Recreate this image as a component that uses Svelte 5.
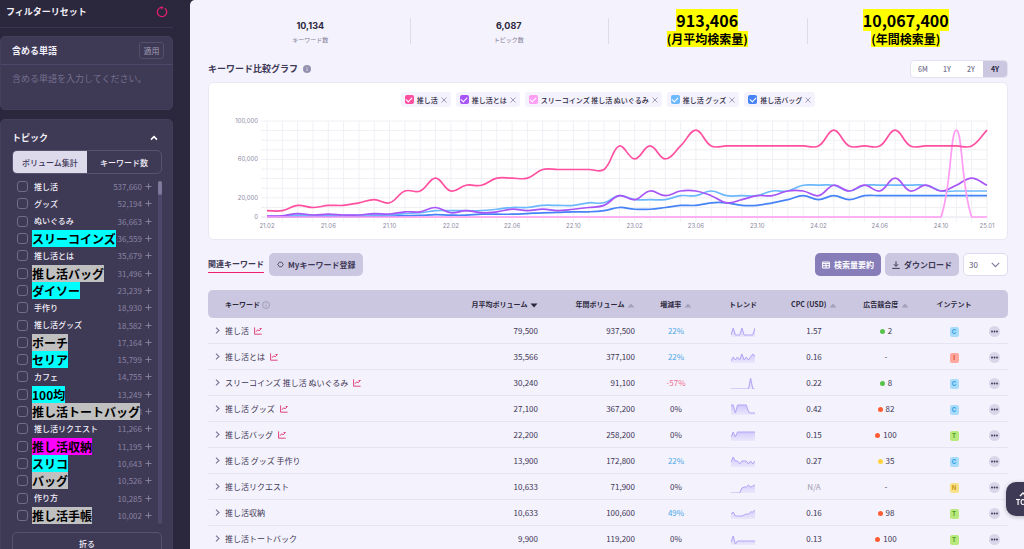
<script lang="ts">
	type Topic = { name: string; count: string; mark?: string };

	const topics: Topic[] = [
		{ name: '推し活', count: '537,660' },
		{ name: 'グッズ', count: '52,194' },
		{ name: 'ぬいぐるみ', count: '36,663' },
		{ name: 'スリーコインズ', count: '36,559', mark: 'cyan' },
		{ name: '推し活とは', count: '35,679' },
		{ name: '推し活バッグ', count: '31,496', mark: 'gray' },
		{ name: 'ダイソー', count: '23,239', mark: 'cyan' },
		{ name: '手作り', count: '18,930' },
		{ name: '推し活グッズ', count: '18,582' },
		{ name: 'ポーチ', count: '17,164', mark: 'gray' },
		{ name: 'セリア', count: '15,799', mark: 'cyan' },
		{ name: 'カフェ', count: '14,755' },
		{ name: '100均', count: '13,249', mark: 'cyan' },
		{ name: '推し活トートバッグ', count: '12,033', mark: 'gray' },
		{ name: '推し活リクエスト', count: '11,266' },
		{ name: '推し活収納', count: '11,195', mark: 'magenta' },
		{ name: 'スリコ', count: '10,643', mark: 'cyan' },
		{ name: 'バッグ', count: '10,526', mark: 'gray' },
		{ name: '作り方', count: '10,285' },
		{ name: '推し活手帳', count: '10,002', mark: 'gray' }
	];

	// monthly search volume in thousands, 21.02 to 25.01
	const series = [
		{
			name: '推し活',
			color: 'pink',
			data: [6.6, 6.6, 12.1, 9.9, 12.1, 12.1, 14.8, 18.1, 14.8, 27.1, 27.1, 40.5, 27.1, 33.1, 33.1, 40.5, 40.5, 40.5, 49.5, 49.5, 49.5, 49.5, 49.5, 74, 60.5, 74, 60.5, 74, 90.5, 74, 74, 74, 74, 74, 74, 74, 74, 90.5, 74, 74, 74, 90.5, 74, 74, 74, 74, 74, 90.5]
		},
		{
			name: '推し活とは',
			color: 'purple',
			data: [0.9, 1.3, 3.6, 2.1, 2.9, 2.1, 2.1, 3.6, 3.1, 5.4, 5.4, 9.9, 4.4, 6.6, 4.4, 5.4, 8.1, 6.6, 8.1, 6.6, 8.1, 9.9, 12.1, 22.2, 18.1, 27.1, 22.2, 27.1, 27.1, 22.2, 14.8, 18.1, 22.2, 22.2, 27.1, 27.1, 22.2, 33.1, 27.1, 33.1, 27.1, 40.5, 27.1, 33.1, 27.1, 33.1, 40.5, 33.1]
		},
		{
			name: 'スリーコインズ 推し活 ぬいぐるみ',
			color: 'rose',
			data: [0, 0, 0, 0, 0, 0, 0, 0, 0, 0, 0, 0, 0, 0, 0, 0, 0, 0, 0, 0, 0, 0, 0, 0, 0, 0, 0, 0, 0, 0, 0, 0, 0, 0, 0, 0, 0, 0, 0, 0, 0, 0, 0, 0, 0, 90.5, 0, 0]
		},
		{
			name: '推し活 グッズ',
			color: 'sky',
			data: [0.7, 1, 1.9, 1.6, 1.9, 1.6, 1.9, 2.4, 2.4, 3.6, 4.4, 6.6, 6.6, 6.6, 6.6, 8.1, 9.9, 9.9, 12.1, 12.1, 12.1, 14.8, 14.8, 22.2, 18.1, 18.1, 18.1, 22.2, 22.2, 27.1, 22.2, 22.2, 22.2, 27.1, 27.1, 33.1, 33.1, 33.1, 27.1, 33.1, 33.1, 33.1, 33.1, 33.1, 27.1, 27.1, 27.1, 27.1]
		},
		{
			name: '推し活バッグ',
			color: 'blue',
			data: [0.3, 0.4, 0.5, 0.5, 0.6, 0.6, 0.7, 0.9, 1, 1.3, 1.6, 2.4, 1.9, 1.9, 2.9, 2.9, 2.9, 3.6, 4.4, 4.8, 5.4, 5.4, 6.6, 9.9, 8.1, 8.1, 9.9, 12.1, 12.1, 14.8, 14.8, 12.1, 12.1, 14.8, 18.1, 22.2, 18.1, 22.2, 18.1, 22.2, 22.2, 22.2, 22.2, 22.2, 22.2, 22.2, 22.2, 22.2]
		}
	];
	const drawOrder = [4, 3, 1, 2, 0];

	const left = 58;
	const top = 14;
	const bottom = 110;
	const step = 720 / 47;
	const px = (i: number) => left + i * step;
	const py = (v: number) => bottom - (v / 100) * (bottom - top);
	const clamp = (y: number) => Math.min(bottom, Math.max(top, y));

	const xLabels = ['21.02', '21.06', '21.10', '22.02', '22.06', '22.10', '23.02', '23.06', '23.10', '24.02', '24.06', '24.10'];
	const yLabels = [
		{ v: 100, text: '100,000' },
		{ v: 60, text: '60,000' },
		{ v: 20, text: '20,000' },
		{ v: 0, text: '0' }
	];

	// smooth line with control points kept inside the plot area
	function smooth(data: number[]) {
		const pts = data.map((v, i) => ({ x: px(i), y: py(v) }));
		const ctrl = pts.map((p, i) => {
			const a = pts[i - 1] ?? p;
			const b = pts[i + 1] ?? p;
			const d1 = Math.hypot(p.x - a.x, p.y - a.y);
			const d2 = Math.hypot(b.x - p.x, b.y - p.y);
			const fa = (0.4 * d1) / (d1 + d2);
			const fb = (0.4 * d2) / (d1 + d2);
			return {
				inX: p.x - fa * (b.x - a.x),
				inY: clamp(p.y - fa * (b.y - a.y)),
				outX: p.x + fb * (b.x - a.x),
				outY: clamp(p.y + fb * (b.y - a.y))
			};
		});
		let d = `M${pts[0].x},${pts[0].y}`;
		for (let i = 1; i < pts.length; i++) {
			d += `C${ctrl[i - 1].outX},${ctrl[i - 1].outY} ${ctrl[i].inX},${ctrl[i].inY} ${pts[i].x},${pts[i].y}`;
		}
		return d;
	}

	const rows = [
		{ word: '推し活', chart: true, month: '79,500', year: '937,500', rate: '22%', cpc: '1.57', comp: '2', level: 'low', intent: 'C', trend: [2, 9, 2, 2, 2, 9, 2, 2, 2, 2, 2, 9] },
		{ word: '推し活とは', chart: true, month: '35,566', year: '377,100', rate: '22%', cpc: '0.16', comp: '-', level: '', intent: 'I', trend: [2, 6, 3, 6, 3, 9, 3, 6, 3, 6, 9, 7] },
		{ word: 'スリーコインズ 推し活 ぬいぐるみ', chart: true, month: '30,240', year: '91,100', rate: '-57%', cpc: '0.22', comp: '8', level: 'low', intent: 'C', trend: [0, 0, 0, 0, 0, 0, 0, 0, 0, 11, 0, 0] },
		{ word: '推し活 グッズ', chart: true, month: '27,100', year: '367,200', rate: '0%', cpc: '0.42', comp: '82', level: 'high', intent: 'C', trend: [10, 10, 2, 10, 10, 10, 10, 10, 3, 2, 2, 2] },
		{ word: '推し活バッグ', chart: true, month: '22,200', year: '258,200', rate: '0%', cpc: '0.15', comp: '100', level: 'high', intent: 'T', trend: [4, 9, 4, 9, 9, 9, 9, 9, 9, 9, 9, 9] },
		{ word: '推し活 グッズ 手作り', chart: false, month: '13,900', year: '172,800', rate: '22%', cpc: '0.27', comp: '35', level: 'mid', intent: 'C', trend: [5, 10, 6, 6, 3, 6, 6, 6, 3, 6, 3, 6] },
		{ word: '推し活リクエスト', chart: false, month: '10,633', year: '71,900', rate: '0%', cpc: 'N/A', comp: '-', level: '', intent: 'N', trend: [0, 0, 0, 0, 0, 5, 6, 6, 8, 6, 7, 8] },
		{ word: '推し活収納', chart: false, month: '10,633', year: '100,600', rate: '49%', cpc: '0.16', comp: '98', level: 'high', intent: 'T', trend: [5, 7, 3, 3, 3, 3, 4, 5, 5, 7, 7, 9] },
		{ word: '推し活トートバック', chart: false, month: '9,900', year: '119,200', rate: '0%', cpc: '0.13', comp: '100', level: 'high', intent: 'T', trend: [3, 9, 1, 4, 4, 4, 4, 4, 4, 4, 4, 4] }
	];

	const spark = (t: number[]) => t.map((v, i) => `${((i * 24) / 11).toFixed(1)},${12 - v}`).join(' ');

	function rateClass(rate: string) {
		if (rate.startsWith('-')) return 'down';
		return rate === '0%' ? '' : 'up';
	}

	const periods = ['6M', '1Y', '2Y', '4Y'];
	let period = $state('4Y');
	let mode = $state('volume');
</script>

{#snippet sort(active = false)}
	<svg class="sort" class:active width="8" height="5" viewBox="0 0 8 5" aria-hidden="true">
		<path d={active ? 'M0.5 0.5h7L4 4.5z' : 'M0.5 4.5h7L4 0.5z'} />
	</svg>
{/snippet}

<div class="shell">
	<aside class="sidebar">
		<div class="reset-bar">
			<h2>フィルターリセット</h2>
			<button class="icon-btn" aria-label="リセット">
				<svg width="12" height="12" viewBox="0 0 12 12">
					<path d="M3.2 2.2A4.7 4.7 0 1 0 8.8 2.2" fill="none" stroke="#e0206c" stroke-width="1.3" />
					<path d="M3.4 2.1Q4.6 1.3 6 1.5" fill="none" stroke="#e0206c" stroke-width="1.3" />
					<path d="M5.2 0l2.4 1.6-2.4 1.8z" fill="#e0206c" />
				</svg>
			</button>
		</div>

		<section class="card include">
			<div class="card-head">
				<label for="include">含める単語</label>
				<button class="apply">適用</button>
			</div>
			<textarea id="include" placeholder="含める単語を入力してください。"></textarea>
		</section>

		<section class="card topics">
			<div class="topics-head">
				<h3>トピック</h3>
				<button class="icon-btn" aria-label="閉じる">
					<svg width="8" height="6" viewBox="0 0 8 6"><path d="M1 4.6L4 1.6l3 3" fill="none" stroke="#fff" stroke-width="1.5" /></svg>
				</button>
			</div>
			<div class="toggle">
				<button class:on={mode === 'volume'} onclick={() => (mode = 'volume')}>ボリューム集計</button>
				<button class:on={mode === 'count'} onclick={() => (mode = 'count')}>キーワード数</button>
			</div>
			<div class="list-wrap">
				<ul>
					{#each topics as t, i}
						<li>
							<input type="checkbox" id="topic-{i}" />
							<label for="topic-{i}" class:marked-topic={t.mark}><span class={t.mark ? `mark ${t.mark}` : ''}>{t.name}</span></label>
							<span class="count">{t.count}</span>
							<button class="icon-btn" aria-label="追加">
								<svg width="7" height="7" viewBox="0 0 7 7"><path d="M3.5 0.5v6M0.5 3.5h6" stroke="#8984a3" stroke-width="0.9" /></svg>
							</button>
						</li>
					{/each}
				</ul>
				<div class="track"><div class="thumb"></div></div>
			</div>
			<button class="fold">折る</button>
		</section>
	</aside>

	<main>
		<div class="stats">
			<div class="stat"><strong>10,134</strong><span>キーワード数</span></div>
			<div class="stat"><strong>6,087</strong><span>トピック数</span></div>
			<div class="stat marked"><strong>913,406</strong><span>(月平均検索量)</span></div>
			<div class="stat marked"><strong>10,067,400</strong><span>(年間検索量)</span></div>
		</div>

		<div class="chart-head">
			<h2>キーワード比較グラフ</h2>
			<svg width="8" height="8" viewBox="0 0 8 8" aria-hidden="true">
				<circle cx="4" cy="4" r="4" fill="#9490b0" />
				<path d="M4 3.5v2.4M4 1.9v.9" stroke="#dcd9ec" stroke-width="1" />
			</svg>
			<div class="periods">
				{#each periods as p}
					<button class:on={period === p} onclick={() => (period = p)}>{p}</button>
				{/each}
			</div>
		</div>

		<section class="chart">
			<div class="legend">
				{#each series as s, i}
					<div class="chip">
						<input type="checkbox" id="series-{i}" class={s.color} checked />
						<label for="series-{i}">{s.name}</label>
						<button class="icon-btn" aria-label="削除">
							<svg width="6" height="6" viewBox="0 0 6 6"><path d="M0.5 0.5l5 5M5.5 0.5l-5 5" stroke="#8b87a3" stroke-width="0.8" /></svg>
						</button>
					</div>
				{/each}
			</div>
			<svg class="plot" viewBox="0 0 798 125">
				<g class="grid">
					{#each Array(11) as _, i}
						<line x1={left - 6} x2={left + 720} y1={py(i * 10)} y2={py(i * 10)} class:base={i === 0} />
					{/each}
					{#each Array(48) as _, i}
						<line x1={px(i)} x2={px(i)} y1={top} y2={bottom + 5} />
					{/each}
				</g>
				{#each yLabels as l}
					<text x="49" y={py(l.v) + 2} text-anchor="end">{l.text}</text>
				{/each}
				{#each xLabels as l, i}
					<text x={px(i * 4)} y="121" text-anchor="middle">{l}</text>
				{/each}
				<text x={px(47)} y="121" text-anchor="middle">25.01</text>
				{#each drawOrder as i}
					<path class="line {series[i].color}" d={smooth(series[i].data)} />
				{/each}
			</svg>
		</section>

		<div class="toolbar">
			<a class="tab" href="#related">関連キーワード</a>
			<button class="btn soft">
				<svg width="7" height="7" viewBox="0 0 7 7"><path d="M2.3 1.2h2.4L6.2 3.5 4.7 5.8H2.3L0.8 3.5z" fill="none" stroke="#3c3755" stroke-width="0.8" /></svg>
				Myキーワード登録
			</button>
			<div class="actions">
				<button class="btn solid">
					<svg width="8" height="8" viewBox="0 0 8 8"><path d="M0.6 1h6.8v6H0.6zM0.6 2.6h6.8M0.6 4.7h6.8M4 2.2V7" fill="none" stroke="#fff" stroke-width="1" /></svg>
					検索量要約
				</button>
				<button class="btn soft">
					<svg width="8" height="8" viewBox="0 0 8 8"><path d="M4 0.4v4.8M1.8 3.2L4 5.4l2.2-2.2M0.3 7.4h7.4" fill="none" stroke="#3c3755" stroke-width="1" /></svg>
					ダウンロード
				</button>
				<div class="size">
					<select aria-label="表示件数">
						<option>30</option>
						<option>50</option>
						<option>100</option>
					</select>
					<svg width="9" height="6" viewBox="0 0 9 6"><path d="M0.8 0.8l3.7 3.9 3.7-3.9" fill="none" stroke="#7f7b9a" stroke-width="1.1" /></svg>
				</div>
			</div>
		</div>

		<table>
			<thead>
				<tr>
					<th class="word">
						キーワード
						<svg width="8" height="8" viewBox="0 0 8 8" aria-hidden="true"><circle cx="4" cy="4" r="3.5" fill="none" stroke="#908caa" stroke-width="0.7" /><path d="M4 3.5v2.3M4 2v.8" stroke="#908caa" stroke-width="0.7" /></svg>
					</th>
					<th class="num month">月平均ボリューム {@render sort(true)}</th>
					<th class="num year">年間ボリューム {@render sort()}</th>
					<th class="rate">増減率 {@render sort()}</th>
					<th class="trend">トレンド</th>
					<th class="cpc">CPC (USD) {@render sort()}</th>
					<th class="comp">広告競合度 {@render sort()}</th>
					<th class="intent">インテント</th>
					<th class="more" aria-label="操作"></th>
				</tr>
			</thead>
			<tbody>
				{#each rows as r}
					<tr>
						<td class="word">
							<div class="word-cell">
								<button class="icon-btn" aria-label="展開">
									<svg width="5" height="7" viewBox="0 0 5 7"><path d="M1 0.7l3 2.8-3 2.8" fill="none" stroke="#7b7698" stroke-width="1.1" /></svg>
								</button>
								<span>{r.word}</span>
								{#if r.chart}
									<svg width="8" height="8" viewBox="0 0 8 8"><path d="M0.6 0.4v6.8h7M2 4.8l1.6-2 1.5 1L7.4 1.6M5.6 1.5h1.9" fill="none" stroke="#de3270" stroke-width="0.9" /></svg>
								{/if}
							</div>
						</td>
						<td class="num">{r.month}</td>
						<td class="num">{r.year}</td>
						<td class={rateClass(r.rate)}>{r.rate}</td>
						<td>
							<svg class="spark" width="24" height="12" viewBox="0 0 24 12">
								<defs>
									<linearGradient id="fade" x1="0" y1="0" x2="0" y2="12" gradientUnits="userSpaceOnUse">
										<stop offset="0" stop-color="#b9aefc" stop-opacity="0.8" />
										<stop offset="1" stop-color="#d8d2fb" stop-opacity="0.35" />
									</linearGradient>
								</defs>
								<polygon points="0,12 {spark(r.trend)} 24,12" fill="url(#fade)" />
								<polyline points={spark(r.trend)} fill="none" stroke="#b0a5f5" stroke-width="1" />
							</svg>
						</td>
						<td class:none={r.cpc === 'N/A'}>{r.cpc}</td>
						<td>{#if r.level}<i class="dot {r.level}"></i>{/if}{r.comp}</td>
						<td><span class="badge {r.intent}">{r.intent}</span></td>
						<td>
							<button class="dots" aria-label="メニュー">
								<svg width="7" height="3" viewBox="0 0 7 3"><circle cx="1" cy="1.5" r="0.9" /><circle cx="3.5" cy="1.5" r="0.9" /><circle cx="6" cy="1.5" r="0.9" /></svg>
							</button>
						</td>
					</tr>
				{/each}
			</tbody>
		</table>
	</main>

	<button class="to-top">
		<svg width="8" height="5" viewBox="0 0 8 5"><path d="M1 4l3-3 3 3" fill="none" stroke="#fff" stroke-width="1.4" /></svg>
		TOP
	</button>
</div>

<style>
	:global(body) {
		background: #2b273c;
	}

	.shell {
		display: flex;
		height: 100vh;
		overflow: hidden;
		font-family: 'Noto Sans CJK JP', sans-serif;
		font-size: 8px;
		color: #3c3755;
		background: #2b273c;
	}

	.shell :global(*) {
		box-sizing: border-box;
	}

	button, select, textarea, input {
		font: inherit;
		color: inherit;
		margin: 0;
		padding: 0;
		border: 0;
		background: none;
	}

	h2, h3, ul {
		margin: 0;
		padding: 0;
	}

	h2, h3 {
		font-size: 9px;
		line-height: 14px;
	}

	svg {
		flex: none;
	}

	.icon-btn {
		display: flex;
		align-items: center;
		justify-content: center;
		flex: none;
	}

	/* Sidebar */
	.sidebar {
		width: 190px;
		flex: none;
		padding-right: 17px;
		overflow: hidden;
		color: #f1eff8;
	}

	.reset-bar {
		display: flex;
		align-items: center;
		justify-content: space-between;
		height: 28px;
		padding: 0 5px 4px 6px;
		border-bottom: 1px solid #3b3650;
	}

	.card {
		background: #3e3955;
		border: 1px solid #433e5a;
		border-radius: 5px;
	}

	.include {
		height: 74px;
		margin-top: 8px;
		overflow: hidden;
	}

	.card-head {
		display: flex;
		align-items: center;
		justify-content: space-between;
		height: 28px;
		padding: 0 8px 0 11px;
		border-bottom: 1px solid #4e496a;
		font-size: 9px;
		font-weight: 700;
	}

	.apply {
		width: 25px;
		height: 17px;
		border: 1px solid #54506c;
		border-radius: 3px;
		font-size: 8px;
		font-weight: 400;
		color: #a19db5;
	}

	textarea {
		display: block;
		width: 100%;
		height: 44px;
		padding: 7px 11px;
		font-size: 9px;
		line-height: 14px;
		resize: none;
		outline: none;
	}

	textarea::placeholder {
		color: #75708d;
	}

	.topics {
		margin-top: 9px;
		padding: 11px 10px 12px 11px;
	}

	.topics-head {
		display: flex;
		align-items: center;
		justify-content: space-between;
		padding-right: 4px;
	}

	.toggle {
		display: flex;
		height: 24px;
		margin-top: 5px;
		border: 1px solid #57526f;
		border-radius: 5px;
		overflow: hidden;
		font-weight: 500;
	}

	.toggle button {
		flex: 1;
	}

	.toggle .on {
		background: #dddaec;
		color: #3c3755;
	}

	.list-wrap {
		display: flex;
		margin: 4px 0 8px 5px;
	}

	ul {
		display: grid;
		grid-auto-rows: 1fr;
		flex: 1;
		height: 346px;
		list-style: none;
	}

	li {
		display: flex;
		align-items: center;
		min-height: 0;
	}

	li input {
		appearance: none;
		width: 11px;
		height: 11px;
		flex: none;
		border: 1px solid #726d8c;
		border-radius: 3px;
	}

	li label {
		width: 0;
		flex: 1;
		padding-left: 6px;
		font-weight: 500;
		line-height: 16px;
		white-space: nowrap;
	}

	.marked-topic {
		padding-top: 3px;
	}

	.mark {
		position: relative;
		margin-left: -2px;
		font-size: 12px;
		font-weight: 700;
		color: #000;
	}

	.cyan { background: #00ffff; }
	.gray { background: #c0c0c0; }
	.magenta { background: #ff00ff; }

	.count {
		color: #8984a3;
		margin-right: 3px;
	}

	.track {
		width: 4px;
		margin: 3px 0 0 6px;
		border-radius: 2px;
		background: #4e496a;
	}

	.thumb {
		height: 14px;
		border-radius: 2px;
		background: #7f7a9c;
	}

	.fold {
		width: 100%;
		height: 23px;
		border: 1px solid #57526f;
		border-radius: 5px;
		font-weight: 500;
	}

	/* Main */
	main {
		flex: 1;
		min-width: 0;
		padding: 9px 16px 0 18px;
		overflow: hidden;
		border-radius: 5px 0 0 0;
		background: #f4f2fc;
	}

	.stats {
		display: flex;
		height: 44px;
		padding: 0 3px;
	}

	.stat {
		position: relative;
		display: flex;
		flex: 1;
		flex-direction: column;
		align-items: center;
		padding-top: 9px;
	}

	.stat + .stat::before {
		content: '';
		position: absolute;
		left: 0;
		top: 9px;
		height: 26px;
		border-left: 1px solid #dedbeb;
	}

	.stat strong {
		font-family: Inter, sans-serif;
		font-size: 9px;
		line-height: 16px;
		color: #2b273c;
	}

	.stat span {
		font-size: 6px;
		line-height: 12px;
		color: #827e98;
	}

	.stat.marked {
		padding-top: 0;
	}

	.marked strong, .marked span {
		font-family: inherit;
		font-weight: 700;
		color: #000;
		background: #ffff00;
	}

	.marked strong {
		font-size: 16px;
		line-height: 22px;
	}

	.marked span {
		font-size: 12px;
		line-height: 16px;
	}

	.chart-head {
		display: flex;
		align-items: center;
		gap: 5px;
		height: 18px;
		margin-top: 7px;
	}

	.chart-head h2 {
		font-weight: 700;
	}

	.periods {
		display: flex;
		width: 98px;
		height: 18px;
		margin-left: auto;
		border: 1px solid #e3e0f0;
		border-radius: 4px;
		overflow: hidden;
		background: #fff;
	}

	.periods button {
		flex: 1;
		font-size: 7px;
		font-weight: 500;
		color: #77738f;
	}

	.periods .on {
		background: #cbc7e0;
		color: #2b273c;
		font-weight: 700;
	}

	.chart {
		margin-top: 4px;
		padding-top: 9px;
		padding-bottom: 7px;
		border: 1px solid #e9e6f5;
		border-radius: 5px;
		background: #fff;
	}

	.legend {
		display: flex;
		justify-content: center;
		gap: 5px;
	}

	.chip {
		display: flex;
		align-items: center;
		gap: 3px;
		height: 15px;
		padding: 0 4px;
		border-radius: 3px;
		background: #f4f2fc;
		font-size: 7px;
		font-weight: 500;
		color: #2b273c;
	}

	.chip input {
		appearance: none;
		display: grid;
		place-items: center;
		width: 9px;
		height: 9px;
		border-radius: 2px;
		background: var(--c);
	}

	.chip input::after {
		content: '';
		width: 5px;
		height: 3px;
		margin-bottom: 2px;
		border: solid #fff;
		border-width: 0 0 1px 1px;
		transform: rotate(-45deg);
	}

	.pink { --c: #ff4fa0; }
	.purple { --c: #a855f7; }
	.rose { --c: #ff9cf3; }
	.sky { --c: #6cb8fc; }
	.blue { --c: #4583f7; }

	.plot {
		display: block;
		width: 100%;
	}

	.plot text {
		font-family: Inter, sans-serif;
		font-size: 6px;
		fill: #8d89a3;
	}

	.grid line {
		stroke: #f0eff4;
		stroke-width: 1;
	}

	.grid .base {
		stroke: #e2e0e8;
	}

	.line {
		fill: none;
		stroke: var(--c);
		stroke-width: 1.7;
	}

	.toolbar {
		display: flex;
		align-items: center;
		height: 23px;
		margin-top: 13px;
	}

	.tab {
		margin-right: 5px;
		border-bottom: 1px solid #f01c6c;
		line-height: 16px;
		font-weight: 700;
		color: #3c3755;
		text-decoration: none;
	}

	.btn {
		display: flex;
		align-items: center;
		gap: 4px;
		height: 23px;
		padding: 0 8px;
		border-radius: 5px;
		font-weight: 700;
		white-space: nowrap;
	}

	.soft {
		background: #cbc7e0;
	}

	.solid {
		background: #877db8;
		color: #fff;
	}

	.actions {
		display: flex;
		gap: 4px;
		margin-left: auto;
	}

	.actions .btn {
		padding: 0 7px;
	}

	.size {
		display: grid;
		align-items: center;
		width: 45px;
		height: 23px;
	}

	.size select, .size svg {
		grid-area: 1 / 1;
	}

	.size select {
		appearance: none;
		width: 100%;
		height: 100%;
		padding: 0 5px;
		border: 1px solid #dedbee;
		border-radius: 5px;
		background: #fff;
		color: #5d5875;
	}

	.size svg {
		justify-self: end;
		margin-right: 8px;
		pointer-events: none;
	}

	/* Table */
	table {
		width: 100%;
		margin-top: 14px;
		table-layout: fixed;
		border-collapse: separate;
		border-spacing: 0;
		text-align: center;
	}

	th, td {
		padding: 0;
		white-space: nowrap;
	}

	th {
		height: 28px;
		background: #cbc7e0;
		font-size: 7px;
		font-weight: 700;
		color: #2b273c;
	}

	th:first-child {
		border-radius: 5px 0 0 5px;
	}

	th:last-child {
		border-radius: 0 5px 5px 0;
	}

	th svg {
		vertical-align: middle;
	}

	td {
		height: 26px;
		line-height: 12px;
		border-bottom: 1px solid #e6e3f2;
	}

	th.word {
		padding-left: 17px;
		text-align: left;
	}

	.num {
		padding-right: 15px;
		text-align: right;
	}

	.month { width: 108px; }
	.year { width: 97px; }
	.rate { width: 52px; }
	.trend { width: 82px; }
	.cpc { width: 60px; }
	.comp { width: 84px; }
	.intent { width: 52px; }
	.more { width: 28px; }

	.sort {
		margin-left: 1px;
		fill: #a5a1bd;
	}

	.sort.active {
		fill: #2b273c;
	}

	.word-cell {
		display: flex;
		align-items: center;
		gap: 5px;
		padding-left: 6px;
	}

	.word-cell .icon-btn {
		width: 6px;
	}

	.up { color: #4aa8e8; }
	.down { color: #f0708f; }
	.none { color: #a09cb3; }

	.spark {
		vertical-align: middle;
	}

	.dot {
		display: inline-block;
		width: 5px;
		height: 5px;
		margin-right: 3px;
		border-radius: 50%;
	}

	.low { background: #58c24a; }
	.mid { background: #ffd23e; }
	.high { background: #ff5c33; }

	.badge {
		display: block;
		width: 9px;
		height: 10px;
		margin: 2px auto 0;
		border-radius: 2px;
		font-family: Inter, sans-serif;
		font-size: 6px;
		font-weight: 700;
		line-height: 10px;
	}

	.C { background: #a9dcfa; color: #2a9be0; }
	.I { background: #ffa79c; color: #dc4433; }
	.T { background: #b9e87c; color: #4a9c2a; }
	.N { background: #f9e18c; color: #c99a10; }

	.dots {
		display: flex;
		align-items: center;
		justify-content: center;
		width: 11px;
		height: 11px;
		margin: 2px auto 0;
		border-radius: 50%;
		background: #d9d6ea;
		fill: #3c3755;
	}

	.to-top {
		position: fixed;
		right: -16px;
		bottom: 33px;
		display: flex;
		flex-direction: column;
		align-items: center;
		justify-content: center;
		gap: 1px;
		width: 34px;
		height: 34px;
		border-radius: 10px;
		background: #3e3955;
		box-shadow: 0 1px 4px rgba(43, 39, 60, 0.3);
		font-family: Inter, sans-serif;
		font-size: 7px;
		font-weight: 700;
		color: #fff;
	}
</style>
